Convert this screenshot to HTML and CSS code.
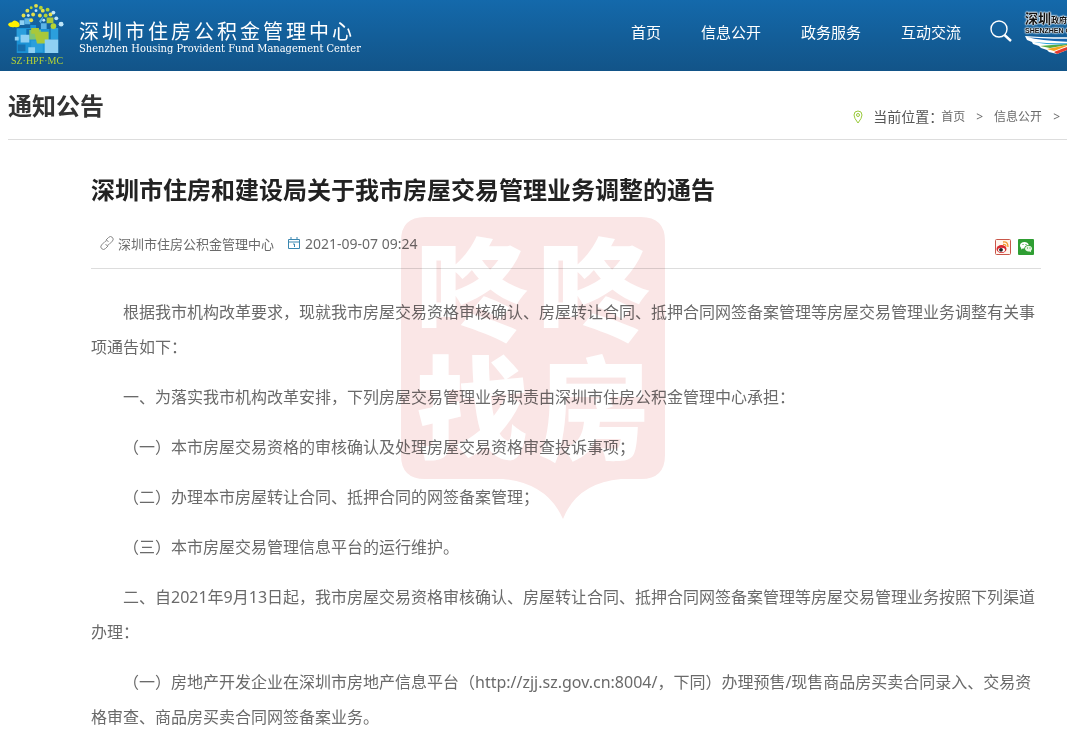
FILE: index.html
```html
<!DOCTYPE html>
<html lang="zh-CN">
<head>
    <meta charset="UTF-8">
    <meta name="viewport" content="width=device-width, initial-scale=1">
    <title>深圳市住房公积金管理中心</title>
    <link rel="stylesheet" href="styles.css">
</head>
<body>
    <header class="header">
        <a class="logo" href="#">
            <span class="logo-mark">
                <svg class="logo-house" viewBox="0 0 60 56" aria-hidden="true">
                    <path fill="#1c93d6" d="M9 28h14v-3h6v4h14v11h9v14H9z"/>
                    <path fill="#2b9fdd" d="M9 29h10v11H9zM24 41h12v12H24zM44 28h8v12h-8z"/>
                    <path fill="#176fae" d="M19 29h5v7h-5zM10 45h8v7h-8z"/>
                    <path fill="#7cc576" d="M22 30h12v10H22z"/>
                    <path fill="#a9c83a" d="M27 32h15v12H30zM24 28h8v6h-8zM40 17h7v6h-7z"/>
                    <path fill="#8fd0f3" d="M13 35h9v8h-9zM21 48h7v6h-7zM38 40h14v14H38zM12 20h5v5h-5zM7 37h4v4H7z"/>
                    <path fill="#5cb4e6" d="M17 18h6v6h-6zM34 23h6v6h-6zM30 19l4 4 3-8-5 6z"/>
                    <path fill="#fff200" d="M0 25q0-3 4-3q2-3 5-1q3 1 3 5q-2 2-5 1q-5 1-7-2z"/>
                    <g fill="#e5e04a">
                        <circle cx="29" cy="5" r="2"/><circle cx="20" cy="10" r="2"/><circle cx="36" cy="10" r="2"/><circle cx="16" cy="15" r="2"/>
                        <circle cx="26" cy="14" r="2"/><circle cx="33" cy="15" r="2"/><circle cx="24" cy="20" r="2"/><circle cx="44" cy="14" r="2"/>
                    </g>
                    <g fill="#b5d334">
                        <circle cx="34" cy="7" r="2"/><circle cx="24" cy="7" r="1.500"/><circle cx="41" cy="9" r="2"/><circle cx="47" cy="26" r="3"/><circle cx="39" cy="15" r="2"/>
                    </g>
                    <g fill="#bfe6f8">
                        <circle cx="29" cy="10" r="1.500"/><circle cx="21" cy="15" r="1.500"/><circle cx="47" cy="12" r="2"/><circle cx="50" cy="18" r="2"/><circle cx="55" cy="24" r="2.500"/><circle cx="37" cy="20" r="1.500"/>
                    </g>
                </svg>
                <span class="logo-code">SZ·HPF·MC</span>
            </span>
            <span class="logo-text">
                <span class="logo-cn">深圳市住房公积金管理中心</span>
                <span class="logo-en">Shenzhen Housing Provident Fund Management Center</span>
            </span>
        </a>
        <nav class="nav">
            <a href="#">首页</a>
            <a href="#">信息公开</a>
            <a href="#">政务服务</a>
            <a href="#">互动交流</a>
        </nav>
        <button class="search" type="button" aria-label="搜索">
            <svg viewBox="0 0 24 24" width="24" height="24">
                <circle cx="10" cy="9" r="8" fill="none" stroke="#fff" stroke-width="1.4"/>
                <path d="M15.500 15l6.500 6" stroke="#fff" stroke-width="2.4"/>
            </svg>
        </button>
        <a class="gov" href="#" aria-label="深圳政府在线">
            <span class="gov-name">深圳<small>政府在线</small></span>
            <span class="gov-en">SHENZHEN GOV</span>
            <svg class="gov-wing" viewBox="0 0 84 20" aria-hidden="true">
                <path fill="#fff" d="M0 1q20 2 84 1v12L50 12 32 19 24 17 22 15 16 13 14 11 8 9 7 7 2 5z"/>
                <path fill="#1767b1" d="M2 2q20 3 82 1v4Q24 8 2 2z"/>
                <path fill="#2aa3dc" d="M9 7q16 2 75 1v2Q24 11 9 7z"/>
                <path fill="#57ab3c" d="M15 11q12-1 32-2l-22 4z"/>
                <path fill="#f5a51d" d="M22 14q12-2 25-5l-18 7z"/>
                <path fill="#e33b2e" d="M29 17q10-4 22-8l3 1-22 9z"/>
            </svg>
        </a>
    </header>

    <div class="title-bar">
        <h2>通知公告</h2>
        <div class="crumbs">
            <svg class="pin" viewBox="0 0 10 14" width="10" height="14" fill="none" stroke="#9aca3c" aria-hidden="true">
                <path d="M5 13Q1 8 1 5a4 4 0 0 1 8 0Q9 8 5 13z"/>
                <circle cx="5" cy="5" r="1.5"/>
            </svg>
            <span class="crumbs-label">当前位置：</span>
            <a href="#">首页</a>
            <span class="sep">&gt;</span>
            <a href="#">信息公开</a>
            <span class="sep">&gt;</span>
        </div>
    </div>

    <main class="article">
        <h1>深圳市住房和建设局关于我市房屋交易管理业务调整的通告</h1>
        <div class="meta">
            <svg viewBox="0 0 14 14" width="14" height="14" fill="none" stroke="#888" aria-hidden="true">
                <path d="M6 4l2.500-2.500a2.300 2.300 0 0 1 4 3.500L9 8.500a2.300 2.300 0 0 1-3.500 0M8 10l-2.500 2.500a2.300 2.300 0 0 1-4-3.500L5 5.500a2.300 2.300 0 0 1 3.500 0"/>
            </svg>
            <span class="source">深圳市住房公积金管理中心</span>
            <svg viewBox="0 0 14 14" width="14" height="14" fill="none" stroke="#3a87b0" aria-hidden="true">
                <path d="M1.500 3.500h11v9h-11zM1.500 6h11M4 1v3M10 1v3M6 8h1.500v3"/>
            </svg>
            <time datetime="2021-09-07 09:24">2021-09-07 09:24</time>
            <div class="share">
                <a href="#" aria-label="微博">
                    <svg viewBox="0 0 16 16" width="16" height="16">
                        <rect x=".5" y=".5" width="15" height="15" rx="1" fill="#fff6ee" stroke="#c9574a"/>
                        <ellipse cx="6.500" cy="10" rx="5" ry="4" fill="#d7282f"/>
                        <ellipse cx="6.500" cy="11" rx="3.500" ry="2.200" fill="#fff"/>
                        <circle cx="6" cy="10.800" r="1.900" fill="#222"/>
                        <path d="M8 3q5-1 5 5M8 5.500q3-.5 3 2" fill="none" stroke="#f29a2e" stroke-width="1.300"/>
                    </svg>
                </a>
                <a href="#" aria-label="微信">
                    <svg viewBox="0 0 16 16" width="16" height="16">
                        <rect width="16" height="16" rx="1" fill="#2f9e33"/>
                        <path fill="#fff" d="M6.500 3C4 3 2 4.500 2 6.500q0 1.500 1.300 2.500L3 10.500l1.800-1h1.500Q6.500 6 10.800 6C10.300 4 8.500 3 6.500 3z"/>
                        <path fill="#e9f7e4" d="M10.500 6.800C8.500 6.800 7 8 7 9.600s1.500 2.900 3.500 2.900h1l1.700.8-.4-1.400q1.200-.9 1.200-2.300c0-1.600-1.500-2.800-3.500-2.800z"/>
                        <path stroke="#2f9e33" d="M4.500 5.500h1M7.500 5.500h1M9 9h1M11.500 9h1"/>
                    </svg>
                </a>
            </div>
        </div>

        <div class="content">
            <p>根据我市机构改革要求，现就我市房屋交易资格审核确认、房屋转让合同、抵押合同网签备案管理等房屋交易管理业务调整有关事项通告如下：</p>
            <p>一、为落实我市机构改革安排，下列房屋交易管理业务职责由深圳市住房公积金管理中心承担：</p>
            <p>（一）本市房屋交易资格的审核确认及处理房屋交易资格审查投诉事项；</p>
            <p>（二）办理本市房屋转让合同、抵押合同的网签备案管理；</p>
            <p>（三）本市房屋交易管理信息平台的运行维护。</p>
            <p>二、自2021年9月13日起，我市房屋交易资格审核确认、房屋转让合同、抵押合同网签备案管理等房屋交易管理业务按照下列渠道办理：</p>
            <p>（一）房地产开发企业在深圳市房地产信息平台（http://zjj.sz.gov.cn:8004/，下同）办理预售/现售商品房买卖合同录入、交易资格审查、商品房买卖合同网签备案业务。</p>
        </div>

        <div class="watermark">
            <svg viewBox="0 0 264 302" aria-hidden="true">
                <path fill="#fae6e6" d="M24 0h216q24 0 24 24v214q0 24-24 24h-20Q176 266 162 302Q146 266 102 262H24Q0 262 0 238V24Q0 0 24 0z"/>
            </svg>
            <span>咚</span>
            <span>咚</span>
            <span>找</span>
            <span>房</span>
        </div>
    </main>
</body>
</html>
```
FILE: styles.css
```css
* {
    box-sizing: border-box;
}
body {
    margin: 0;
    font-family: "Noto Sans", "Noto Sans CJK SC", sans-serif;
    color: #6a6a6a;
    background: #fff;
    overflow: hidden;
}
a {
    color: inherit;
    text-decoration: none;
}
.header {
    display: flex;
    align-items: flex-start;
    height: 71px;
    padding-left: 8px;
    background: linear-gradient(#1469ab, #125488);
    color: #fff;
    overflow: hidden;
}
.logo {
    display: flex;
    gap: 13px;
}
.logo-mark {
    display: flex;
    flex-direction: column;
    align-items: center;
    width: 58px;
    padding-top: 1px;
}
.logo-house {
    width: 60px;
    height: 54px;
}
.logo-code {
    font: 10px/12px "Liberation Serif", serif;
    color: #b5d334;
    white-space: nowrap;
}
.logo-text {
    display: flex;
    flex-direction: column;
    padding-top: 21px;
    white-space: nowrap;
}
.logo-cn {
    font-size: 20px;
    line-height: 22px;
    letter-spacing: 3px;
}
.logo-en {
    font: 11px/12px "DejaVu Serif Condensed", "DejaVu Serif", serif;
}
.nav {
    display: flex;
    gap: 40px;
    margin-left: auto;
    font-size: 15px;
    line-height: 22px;
    padding-top: 21px;
    white-space: nowrap;
}
.search {
    padding: 0;
    margin: 20px 12px 0 28px;
    height: 24px;
    border: 0;
    background: none;
    cursor: pointer;
}
.gov {
    display: flex;
    flex-direction: column;
    flex: none;
    width: 42px;
    padding-top: 11px;
    white-space: nowrap;
    color: #111;
    text-shadow: 0 0 1px #fff, 0 0 2px #fff, 0 0 2px #fff, 0 0 2px #fff;
}
.gov-name {
    font: bold 13px/14px "Noto Sans CJK SC", sans-serif;
}
.gov-name small {
    font-size: 8px;
}
.gov-en {
    font: bold 7px/8px "Liberation Sans", sans-serif;
}
.gov-wing {
    width: 84px;
    height: 20px;
}
.title-bar {
    display: flex;
    justify-content: space-between;
    align-items: flex-end;
    margin-left: 8px;
    height: 69px;
    padding-bottom: 10px;
    border-bottom: 1px solid #ddd;
}
.title-bar h2 {
    margin: 0;
    padding-bottom: 5px;
    font-size: 24px;
    line-height: 36px;
    color: #333;
}
.crumbs {
    display: flex;
    align-items: center;
    padding-right: 7px;
    font-size: 12px;
    line-height: 24px;
    white-space: nowrap;
}
.pin {
    margin-right: 10px;
}
.crumbs-label {
    width: 68px;
    font-size: 14px;
    color: #555;
}
.sep {
    margin: 0 11px;
}
.sep:last-child {
    margin-right: 0;
}
.article {
    position: relative;
    padding: 32px 26px 0 91px;
}
.article h1 {
    margin: 0;
    font-size: 24px;
    line-height: 36px;
    color: #222;
}
.meta {
    display: flex;
    align-items: center;
    height: 61px;
    padding: 10px 7px 0 9px;
    border-bottom: 1px solid #ddd;
    font-size: 13px;
}
.meta > svg {
    margin-right: 4px;
}
.meta time {
    font-size: 14px;
}
.source {
    margin-right: 13px;
}
.share {
    display: flex;
    gap: 7px;
    margin-left: auto;
    padding-top: 8px;
}
.share svg {
    display: block;
}
.content {
    padding-top: 26px;
    font-size: 16px;
    line-height: 35px;
}
.content p {
    margin: 0 0 15px;
    text-indent: 2em;
}
/* semi-transparent stamp over the text */
.watermark {
    position: absolute;
    top: 77px;
    left: 401px;
    display: grid;
    grid-template-columns: 112px 112px;
    justify-content: center;
    align-content: start;
    column-gap: 10px;
    width: 264px;
    height: 302px;
    padding-top: 8px;
    mix-blend-mode: multiply;
    pointer-events: none;
    color: #fff;
    font: 900 112px/118px "Noto Sans CJK SC", sans-serif;
}
.watermark svg {
    position: absolute;
    inset: 0;
}
.watermark span {
    position: relative;
}
```
